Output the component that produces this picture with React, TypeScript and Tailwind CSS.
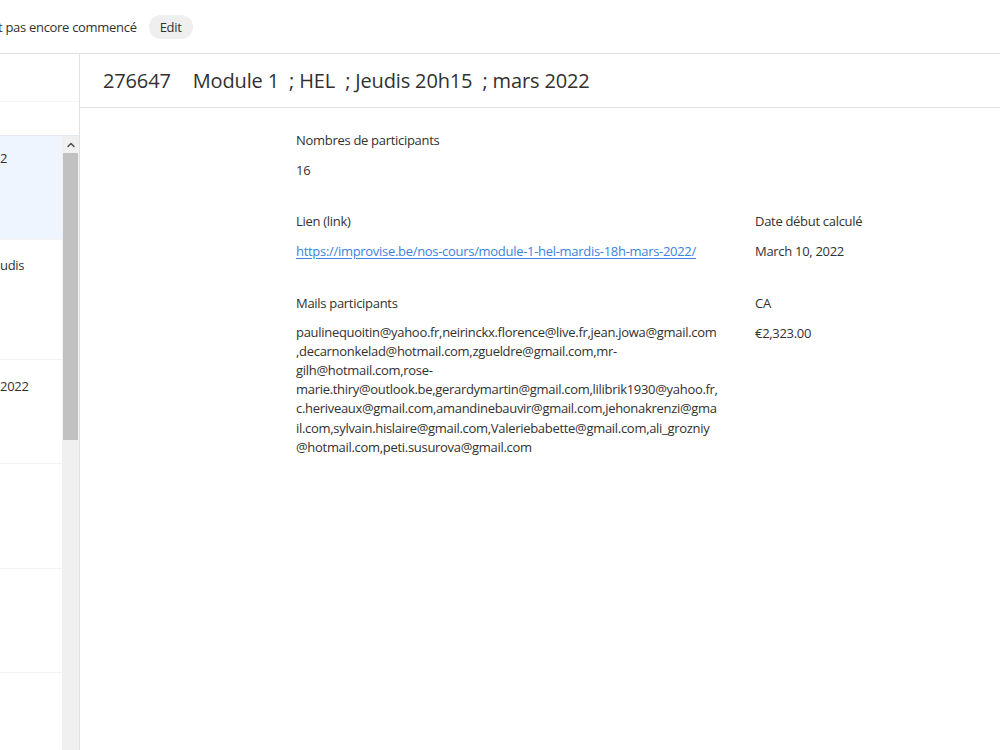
import { ChevronUp } from 'lucide-react';

const mails = [
  'paulinequoitin@yahoo.fr,neirinckx.florence@live.fr,jean.jowa@gmail.com',
  ',decarnonkelad@hotmail.com,zgueldre@gmail.com,mr-',
  'gilh@hotmail.com,rose-',
  'marie.thiry@outlook.be,gerardymartin@gmail.com,lilibrik1930@yahoo.fr,',
  'c.heriveaux@gmail.com,amandinebauvir@gmail.com,jehonakrenzi@gma',
  'il.com,sylvain.hislaire@gmail.com,Valeriebabette@gmail.com,ali_grozniy',
  '@hotmail.com,peti.susurova@gmail.com',
];

const listItems = [
  { text: '2', selected: true, h: 'h-[104px]', pt: 'pt-[12px]' },
  { text: 'udis', selected: false, h: 'h-[120px]', pt: 'pt-[15px]' },
  { text: '2022', selected: false, h: 'h-[104px]', pt: 'pt-[16px]' },
  { text: '', selected: false, h: 'h-[105px]', pt: 'pt-[12px]' },
  { text: '', selected: false, h: 'h-[104px]', pt: 'pt-[12px]' },
  { text: '', selected: false, h: 'h-[104px]', pt: 'pt-[12px]' },
];

function Field({ label, children }: { label: string; children: React.ReactNode }) {
  return (
    <div>
      <div className="h-5 leading-5">{label}</div>
      <div className="mt-[10px]">{children}</div>
    </div>
  );
}

export default function App() {
  return (
    <div
      className="h-[750px] w-[1000px] overflow-hidden bg-white text-[13px] tracking-[-0.3px] text-[#323130] flex flex-col"
      style={{ fontFamily: '"Open Sans", "Liberation Sans", sans-serif' }}
    >
      {/* top bar */}
      <div className="h-[54px] shrink-0 border-b border-[#e1e1e1] flex items-center">
        <span className="ml-[-2px] leading-5 whitespace-nowrap">t pas encore commencé</span>
        <button className="ml-[12px] h-6 px-[11px] rounded-full bg-[#efefef] text-[13px] text-[#323130] leading-6">
          Edit
        </button>
      </div>

      <div className="flex flex-1 min-h-0">
        {/* left list */}
        <aside className="w-[80px] shrink-0 border-r border-[#e1e1e1] flex flex-col">
          <div className="h-[48px] border-b border-[#f3f3f3]" />
          <div className="h-[34px] border-b border-[#e3e8ef]" />
          <div className="flex flex-1 min-h-0">
            <div className="flex-1 flex flex-col">
              {listItems.map((item, i) => (
                <div
                  key={i}
                  className={`${item.h} ${item.pt} shrink-0 border-b border-[#f3f3f3] leading-5 ${
                    item.selected ? 'bg-[#eef5fe]' : 'bg-white'
                  }`}
                >
                  {item.text}
                </div>
              ))}
            </div>
            <div className="w-[17px] bg-[#f0f0f0] flex flex-col">
              <div className="h-[17px] flex items-center justify-center">
                <ChevronUp size={12} strokeWidth={3} className="text-[#505050]" />
              </div>
              <div className="h-[287px] mx-[1px] bg-[#c1c1c1]" />
            </div>
          </div>
        </aside>

        {/* detail */}
        <main className="flex-1 flex flex-col">
          <div className="h-[54px] shrink-0 border-b border-[#e1e1e1] flex items-center pl-[23px]">
            <h1 className="text-[20px] leading-7 tracking-[-0.15px] whitespace-pre">
              276647<span className="ml-[22px]">Module 1  ; HEL  ; Jeudis 20h15  ; mars 2022</span>
            </h1>
          </div>

          <div className="pl-[216px] pt-[22px] grid grid-cols-[459px_1fr] gap-y-[31px]">
            <Field label="Nombres de participants">
              <div className="leading-5">16</div>
            </Field>
            <div />
            <Field label="Lien (link)">
              <a
                href="#"
                className="leading-5 text-[#3a84e0] underline underline-offset-2"
              >
                https://improvise.be/nos-cours/module-1-hel-mardis-18h-mars-2022/
              </a>
            </Field>
            <Field label="Date début calculé">
              <div className="leading-5">March 10, 2022</div>
            </Field>
            <Field label="Mails participants">
              <div className="leading-[19.2px]">
                {mails.map((m, i) => (
                  <div key={i} className="whitespace-nowrap">
                    {m}
                  </div>
                ))}
              </div>
            </Field>
            <Field label="CA">
              <div className="leading-5">€2,323.00</div>
            </Field>
          </div>
        </main>
      </div>
    </div>
  );
}
